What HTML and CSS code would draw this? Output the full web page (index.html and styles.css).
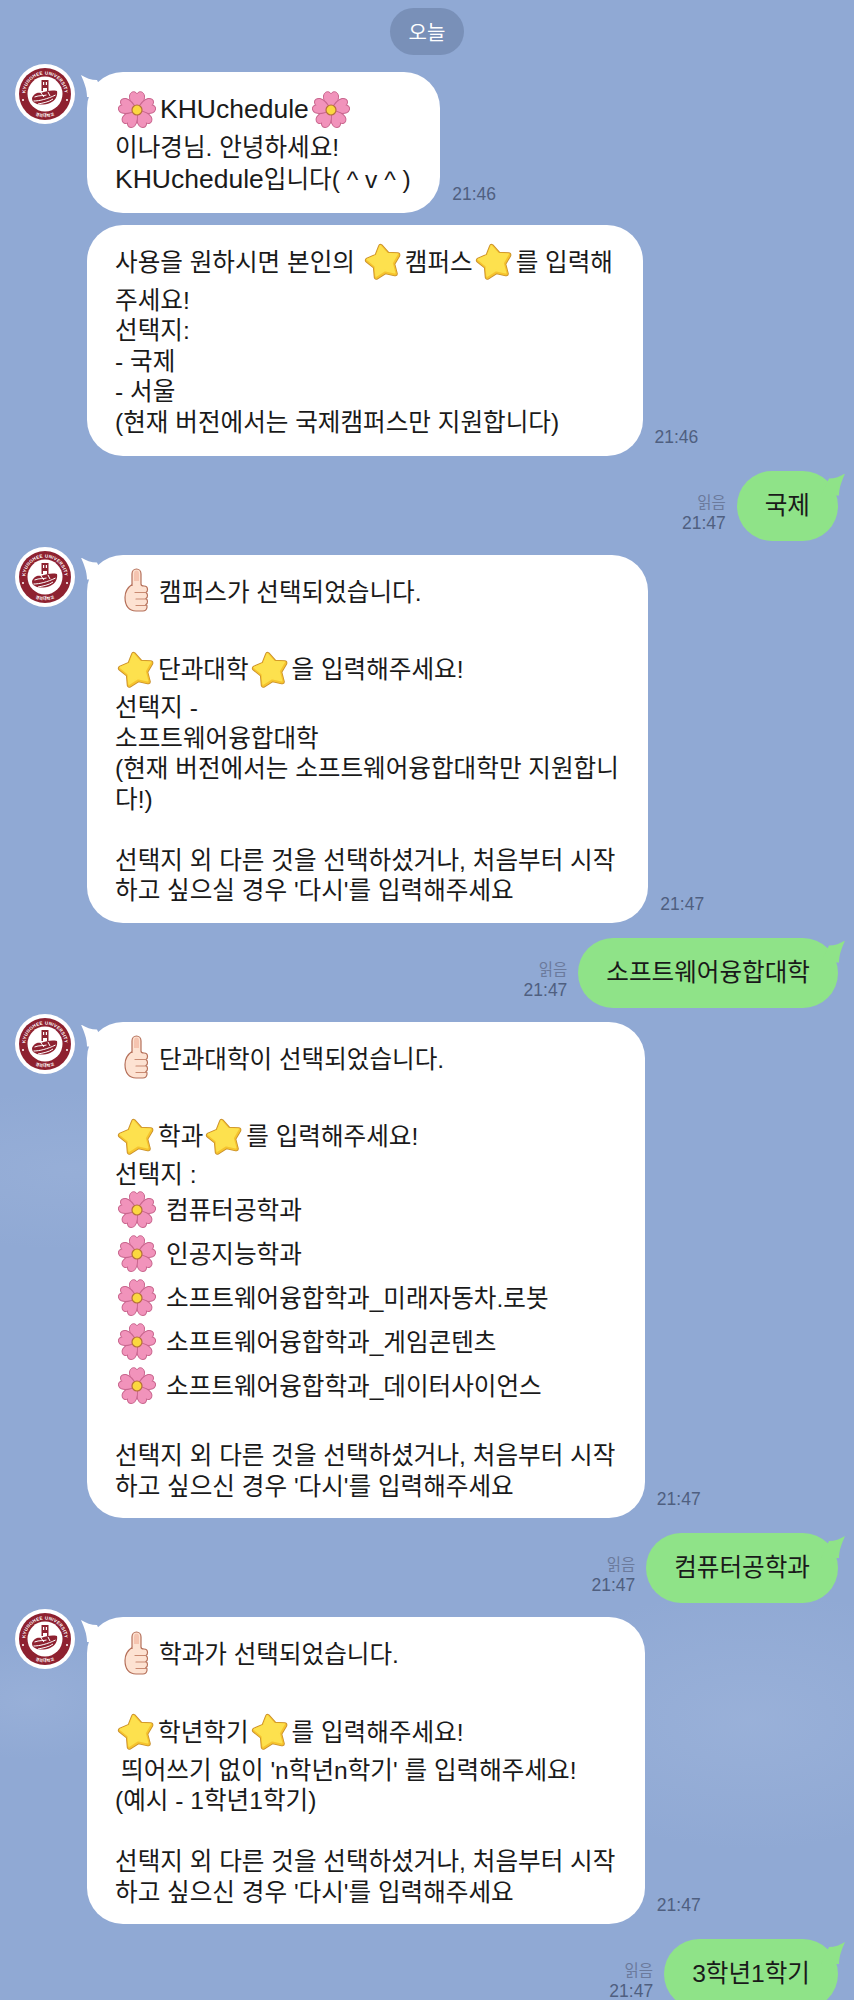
FILE: index.html
```html
<!DOCTYPE html>
<html lang="ko">
<head>
  <meta charset="UTF-8">
  <meta name="viewport" content="width=device-width, initial-scale=1.0">
  <title>KHUchedule</title>
  <link rel="stylesheet" href="styles.css">
</head>
<body>
  <svg class="icon-defs" width="0" height="0" aria-hidden="true">
    <defs>
      <symbol id="flower" viewBox="0 0 40 40">
        <g fill="#f193bb" stroke="#c9668e" stroke-width="1">
          <path id="petal" d="M20 20C16 16 12 11 12.500 6 13 2.500 16 1 18 2 19 2.500 19.700 3.200 20 3.800 20.300 3.200 21 2.500 22 2 24 1 27 2.500 27.500 6 28 11 24 16 20 20z"/>
          <use href="#petal" transform="rotate(72 20 20)"/>
          <use href="#petal" transform="rotate(144 20 20)"/>
          <use href="#petal" transform="rotate(216 20 20)"/>
          <use href="#petal" transform="rotate(288 20 20)"/>
        </g>
        <circle cx="20" cy="20" r="5" fill="#fbd83f" stroke="#b5703a" stroke-width="1.200"/>
      </symbol>
      <symbol id="star" viewBox="0 0 40 40">
        <path d="M16.700 4.700 23.400 12.400 33.600 13 28.400 21.800 31 31.600 21.100 29.400 12.500 34.900 11.600 24.700 3.700 18.300 13 14.200z" fill="#c98f2a" stroke="#c98f2a" stroke-width="5.500" stroke-linejoin="round"/>
        <path d="M16.700 4.700 23.400 12.400 33.600 13 28.400 21.800 31 31.600 21.100 29.400 12.500 34.900 11.600 24.700 3.700 18.300 13 14.200z" fill="#f6c42e" stroke="#f6c42e" stroke-width="3.800" stroke-linejoin="round"/>
        <path d="M16.700 4.700 23.400 12.400 33.600 13 28.400 21.800 31 31.600 21.100 29.400 12.500 34.900 11.600 24.700 3.700 18.300 13 14.200z" fill="#fde14e" stroke="#fde14e" stroke-width="1.500" stroke-linejoin="round" transform="translate(-.4 -.8)"/>
      </symbol>
      <symbol id="thumb" viewBox="0 0 40 50">
        <path d="M17 19V7c0-3 2-5 4.500-5S26 4 26 7v10c0 1.500 1 2 3 2 2.500 0 3.500 1.500 3.500 3.500 0 1.500-.5 2.500-1.500 3 1 .8 1.500 1.700 1.500 3s-.5 2.300-1.500 3c1 .8 1.500 1.700 1.500 3s-.5 2.300-1.500 3c1 .8 1.300 1.800 1 3-.4 2-2 3.500-4 3.500H21c-7 0-11-5-11-13.500 0-6 2.500-10 7-13z" fill="#fde2d2" stroke="#b5705a" stroke-width="1.200"/>
        <path d="M20 25.500h11M21 32h10M21 38.500h10" fill="none" stroke="#c98a72" stroke-width="1.200" stroke-linecap="round"/>
        <path d="M19 7c0-2.500 1-3.500 2.500-3.500S24 4.500 24 7v7h-5z" fill="#f5c4b0"/>
      </symbol>
      <symbol id="khu-logo" viewBox="0 0 60 60">
        <circle cx="30" cy="30" r="30" fill="#fff"/>
        <circle cx="30" cy="30" r="26" fill="#8e2130"/>
        <circle cx="30" cy="30" r="17.500" fill="#fff"/>
        <path id="logo-arc" d="M14 41.400a19.600 19.600 0 1 1 32 0" fill="none"/>
        <path id="logo-arc-low" d="M14 47a23.500 23.500 0 0 0 32 0" fill="none"/>
        <text class="logo-text"><textPath href="#logo-arc" startOffset="50%" text-anchor="middle">KYUNGHEE UNIVERSITY</textPath></text>
        <text class="logo-text low"><textPath href="#logo-arc-low" startOffset="50%" text-anchor="middle">경희대학교</textPath></text>
        <circle cx="8" cy="36" r="1" fill="#fff"/>
        <circle cx="52" cy="36" r="1" fill="#fff"/>
        <path d="M26.500 27V16h7v11h-1.500v-3h-4v3z M28 18v3h1.200v-3z M30.800 18v3H32v-3z" fill="#8e2130" fill-rule="evenodd"/>
        <path d="M17 34c2-5 6-6 9-5 5-2 11-3 16-2 1 5-2 10-7 12-5 2-12 2-15 0-2-1-3-2-3-5z" fill="#8e2130"/>
        <path d="M18.500 37c6 0 14-2 22-6M19.500 33c5-2 9-1 12-2M23 40c5-1 11-2 15-5M26 29l3 4M33 28l2 4" fill="none" stroke="#fff" stroke-width="1"/>
      </symbol>
    </defs>
  </svg>

  <div class="chat">
    <div class="date-row"><span class="date-pill">오늘</span></div>

    <div class="msg-row">
      <svg class="avatar"><use href="#khu-logo"/></svg>
      <div class="bubble short tail-left">
        <div class="line-tall"><svg class="emoji flower"><use href="#flower"/></svg><span class="latin">KHUchedule</span><svg class="emoji flower"><use href="#flower"/></svg></div>
        <div>이나경님. 안녕하세요!</div>
        <div><span class="latin">KHUchedule</span>입니다( ^ v ^ )</div>
      </div>
      <span class="time">21:46</span>
    </div>

    <div class="msg-row grouped">
      <div class="bubble short">
        <div class="line-tall">사용을 원하시면 본인의 <svg class="emoji star"><use href="#star"/></svg>캠퍼스<svg class="emoji star"><use href="#star"/></svg>를 입력해</div>
        <div>주세요!</div>
        <div>선택지:</div>
        <div>- 국제</div>
        <div>- 서울</div>
        <div>(현재 버전에서는 국제캠퍼스만 지원합니다)</div>
      </div>
      <span class="time">21:46</span>
    </div>

    <div class="my-row">
      <div class="my-meta"><span class="read">읽음</span><span class="time">21:47</span></div>
      <div class="bubble mine tail-right">국제</div>
    </div>

    <div class="msg-row">
      <svg class="avatar"><use href="#khu-logo"/></svg>
      <div class="bubble tail-left">
        <div class="line-tall"><svg class="emoji thumb"><use href="#thumb"/></svg>캠퍼스가 선택되었습니다.</div>
        <div class="blank"></div>
        <div class="line-tall"><svg class="emoji star"><use href="#star"/></svg>단과대학<svg class="emoji star"><use href="#star"/></svg>을 입력해주세요!</div>
        <div>선택지 -</div>
        <div>소프트웨어융합대학</div>
        <div>(현재 버전에서는 소프트웨어융합대학만 지원합니</div>
        <div>다!)</div>
        <div class="blank"></div>
        <div>선택지 외 다른 것을 선택하셨거나, 처음부터 시작</div>
        <div>하고 싶으실 경우 '다시'를 입력해주세요</div>
      </div>
      <span class="time">21:47</span>
    </div>

    <div class="my-row">
      <div class="my-meta"><span class="read">읽음</span><span class="time">21:47</span></div>
      <div class="bubble mine tail-right">소프트웨어융합대학</div>
    </div>

    <div class="msg-row">
      <svg class="avatar"><use href="#khu-logo"/></svg>
      <div class="bubble tail-left">
        <div class="line-tall"><svg class="emoji thumb"><use href="#thumb"/></svg>단과대학이 선택되었습니다.</div>
        <div class="blank"></div>
        <div class="line-tall"><svg class="emoji star"><use href="#star"/></svg>학과<svg class="emoji star"><use href="#star"/></svg>를 입력해주세요!</div>
        <div>선택지 :</div>
        <div class="line-item"><svg class="emoji flower"><use href="#flower"/></svg>컴퓨터공학과</div>
        <div class="line-item"><svg class="emoji flower"><use href="#flower"/></svg>인공지능학과</div>
        <div class="line-item"><svg class="emoji flower"><use href="#flower"/></svg>소프트웨어융합학과_미래자동차.로봇</div>
        <div class="line-item"><svg class="emoji flower"><use href="#flower"/></svg>소프트웨어융합학과_게임콘텐츠</div>
        <div class="line-item"><svg class="emoji flower"><use href="#flower"/></svg>소프트웨어융합학과_데이터사이언스</div>
        <div class="blank"></div>
        <div>선택지 외 다른 것을 선택하셨거나, 처음부터 시작</div>
        <div>하고 싶으신 경우 '다시'를 입력해주세요</div>
      </div>
      <span class="time">21:47</span>
    </div>

    <div class="my-row">
      <div class="my-meta"><span class="read">읽음</span><span class="time">21:47</span></div>
      <div class="bubble mine tail-right">컴퓨터공학과</div>
    </div>

    <div class="msg-row">
      <svg class="avatar"><use href="#khu-logo"/></svg>
      <div class="bubble tail-left">
        <div class="line-tall"><svg class="emoji thumb"><use href="#thumb"/></svg>학과가 선택되었습니다.</div>
        <div class="blank"></div>
        <div class="line-tall"><svg class="emoji star"><use href="#star"/></svg>학년학기<svg class="emoji star"><use href="#star"/></svg>를 입력해주세요!</div>
        <div class="indent">띄어쓰기 없이 'n학년n학기' 를 입력해주세요!</div>
        <div>(예시 - 1학년1학기)</div>
        <div class="blank"></div>
        <div>선택지 외 다른 것을 선택하셨거나, 처음부터 시작</div>
        <div>하고 싶으신 경우 '다시'를 입력해주세요</div>
      </div>
      <span class="time">21:47</span>
    </div>

    <div class="my-row">
      <div class="my-meta"><span class="read">읽음</span><span class="time">21:47</span></div>
      <div class="bubble mine tail-right">3학년1학기</div>
    </div>
  </div>
</body>
</html>
```

FILE: styles.css
```css
body {
  margin: 0;
  height: 2000px;
  overflow: hidden;
  background-color: #90a9d4;
  background-image:
    radial-gradient(ellipse 220px 80px at 70px 1170px, rgba(170, 190, 225, 0.25), transparent),
    radial-gradient(ellipse 240px 130px at 750px 1720px, rgba(170, 190, 225, 0.35), transparent),
    radial-gradient(ellipse 110px 60px at 30px 1700px, rgba(170, 190, 225, 0.3), transparent);
  color: #1a1a1a;
  font-family: "Liberation Sans", "Noto Sans CJK KR", sans-serif;
  font-size: 24.6px;
}

.icon-defs {
  position: absolute;
}

.logo-text {
  font-size: 4.6px;
  font-weight: 700;
  fill: #fff;
  letter-spacing: 0.25px;
}

.logo-text.low {
  font-size: 4px;
}

.latin {
  font-size: 26.5px;
}

.chat {
  display: flex;
  flex-direction: column;
  padding-top: 8px;
}

.date-row {
  display: flex;
  justify-content: center;
  margin-bottom: 17px;
}

.date-pill {
  display: flex;
  align-items: center;
  height: 47px;
  padding: 0 19px;
  border-radius: 24px;
  background-color: #7990b8;
  color: #fff;
  font-size: 20px;
}

.msg-row {
  display: flex;
  align-items: flex-end;
  padding-left: 15px;
  margin-bottom: 15px;
}

.msg-row.grouped {
  padding-left: 87px;
  margin-top: -3px;
}

.avatar {
  align-self: flex-start;
  width: 60px;
  height: 60px;
  margin: -8px 12px 0 0;
  flex: none;
}

.bubble {
  position: relative;
  background-color: #fff;
  border-radius: 36px;
  padding: 14px 29.5px 16px 28px;
  line-height: 30.5px;
  white-space: nowrap;
}

.bubble.short {
  padding-bottom: 17.5px;
}

.tail-left::before {
  content: "";
  position: absolute;
  left: -6px;
  top: 3px;
  width: 24px;
  height: 22px;
  background-color: #fff;
  clip-path: path("M0 0 C5 3 10 5 16 5 L24 22 L6 22 C6 14 3 7 0 0 Z");
}

.tail-right::after {
  content: "";
  position: absolute;
  right: -7px;
  top: 3px;
  width: 24px;
  height: 22px;
  background-color: #8fe388;
  clip-path: path("M24 0 C19 3 14 5 8 5 L0 22 L18 22 C18 14 21 7 24 0 Z");
}

.bubble.mine {
  background-color: #8fe388;
  padding: 20px 28px;
  line-height: 30px;
}

.time {
  color: #4f5f80;
  font-size: 17.5px;
  line-height: 21px;
  margin: 0 0 8px 12px;
}

.my-row {
  display: flex;
  justify-content: flex-end;
  align-items: flex-end;
  padding-right: 16px;
  margin-bottom: 14px;
}

.my-meta {
  display: flex;
  flex-direction: column;
  align-items: flex-end;
  margin: 0 11px 7px 0;
}

.my-meta .time {
  margin: 0;
}

.read {
  color: #6b7a9c;
  font-size: 15.5px;
  line-height: 21px;
}

.line-tall {
  height: 47px;
  line-height: 47px;
}

.line-item {
  height: 44px;
  line-height: 40px;
}

.blank {
  height: 30.5px;
}

.indent {
  padding-left: 6px;
}

.emoji {
  width: 40px;
  height: 40px;
  vertical-align: middle;
  position: relative;
  top: -2px;
}

.emoji.star {
  margin: 0 1px 0 2px;
}

.emoji.thumb {
  width: 40px;
  height: 50px;
  margin-right: 4px;
}

.emoji.flower {
  margin: 0 3px 0 2px;
}

.line-item .emoji.flower {
  margin-right: 9px;
}
```
